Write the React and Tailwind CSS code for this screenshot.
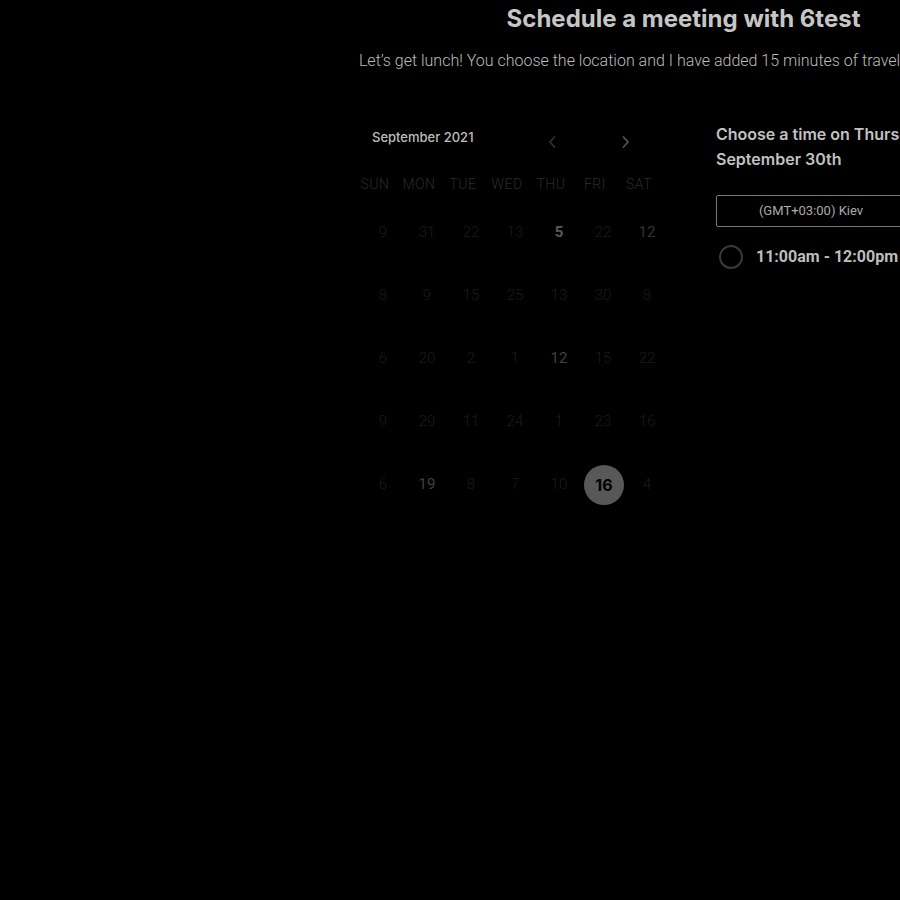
import React from "react";

const rows = [
  [["9", 0], ["31", 0], ["22", 0], ["13", 0], ["5", 3], ["22", 0], ["12", 1]],
  [["8", 0], ["9", 0], ["15", 0], ["25", 0], ["13", 0], ["30", 0], ["8", 0]],
  [["6", 0], ["20", 0], ["2", 0], ["1", 0], ["12", 2], ["15", 0], ["22", 0]],
  [["9", 0], ["29", 0], ["11", 0], ["24", 0], ["1", 0], ["23", 0], ["16", 0]],
  [["6", 0], ["19", 2], ["8", 0], ["7", 0], ["10", 0], ["16", 9], ["4", 0]],
];

const days = ["SUN", "MON", "TUE", "WED", "THU", "FRI", "SAT"];

function DateCell({ value, kind }) {
  if (kind === 9) {
    return (
      <div className="flex h-[63px] items-center justify-center">
        <div className="ml-[2px] flex h-[40px] w-[40px] items-center justify-center rounded-full bg-[#585858] text-[16px] font-bold text-black" style={{ fontFamily: "Inter, sans-serif" }}>
          {value}
        </div>
      </div>
    );
  }
  const cls =
    kind === 3
      ? "text-[#5a5a5a] font-bold"
      : kind === 2
      ? "text-[#404040] font-normal"
      : kind === 1
      ? "text-[#333333] font-normal"
      : "text-[#1c1c1c] font-light";
  return (
    <div className={`flex h-[63px] items-center justify-center text-[15px] ${cls}`}>{value}</div>
  );
}

export default function App() {
  return (
    <div className="h-[900px] w-[900px] overflow-hidden bg-black" style={{ fontFamily: "Roboto, sans-serif" }}>
      <div className="flex w-[1367px] flex-col items-center">
        <h1 className="mt-[3px] h-[32px] text-[24px] font-bold leading-[32px] text-[#c6c6c6]" style={{ fontFamily: "Inter, sans-serif" }}>
          Schedule a meeting with 6test
        </h1>
        <p className="mt-[16px] whitespace-nowrap text-[16px] font-light leading-[20px] text-[#bdbdbd]">
          Let’s get lunch! You choose the location and I have added 15 minutes of travel time each way.
        </p>
        <div className="mt-[42px] flex gap-[47px]">
          <div className="w-[316px] pt-[7px]">
            <div className="flex h-[36px] items-center">
              <div className="w-[195px] pl-[19px] text-[13px] font-medium text-[#bdbdbd]" style={{ fontFamily: "Inter, sans-serif" }}>
                September 2021
              </div>
              <svg width="10" height="14" viewBox="0 0 10 14" className="mt-[8px]">
                <path d="M7 1.5 L2 7 L7 12.5" fill="none" stroke="#333" strokeWidth="1.6" />
              </svg>
              <div className="w-[62px]" />
              <svg width="10" height="14" viewBox="0 0 10 14" className="mt-[8px]">
                <path d="M3 1.5 L8 7 L3 12.5" fill="none" stroke="#585858" strokeWidth="1.6" />
              </svg>
            </div>
            <div className="mt-[16px] grid w-[308px] grid-cols-7">
              {days.map((d) => (
                <div key={d} className="flex h-[24px] items-center justify-center text-[14px] font-light tracking-[0.5px] text-[#2b2b2b]">
                  {d}
                </div>
              ))}
            </div>
            <div className="mt-[5px] ml-[8px] grid w-[308px] grid-cols-7">
              {rows.flat().map(([v, k], i) => (
                <DateCell key={i} value={v} kind={k} />
              ))}
            </div>
          </div>
          <div className="w-[298px]">
            <div className="mt-[9px] whitespace-nowrap text-[16px] font-semibold leading-[25px] text-[#c2c2c2]" style={{ fontFamily: "Inter, sans-serif" }}>
              Choose a time on Thursday,
              <br />
              September 30th
            </div>
            <div className="mt-[23px] flex h-[32px] w-[190px] items-center justify-center rounded-[2px] border border-[#777777] text-[13px] text-[#aaaaaa]">
              (GMT+03:00) Kiev
            </div>
            <div className="mt-[18px] flex items-center">
              <div className="ml-[3px] h-[24px] w-[24px] rounded-full border-2 border-[#3a3a3a]" />
              <div className="ml-[13px] text-[16px] font-bold text-[#bdbdbd]">11:00am - 12:00pm</div>
            </div>
          </div>
        </div>
      </div>
    </div>
  );
}
